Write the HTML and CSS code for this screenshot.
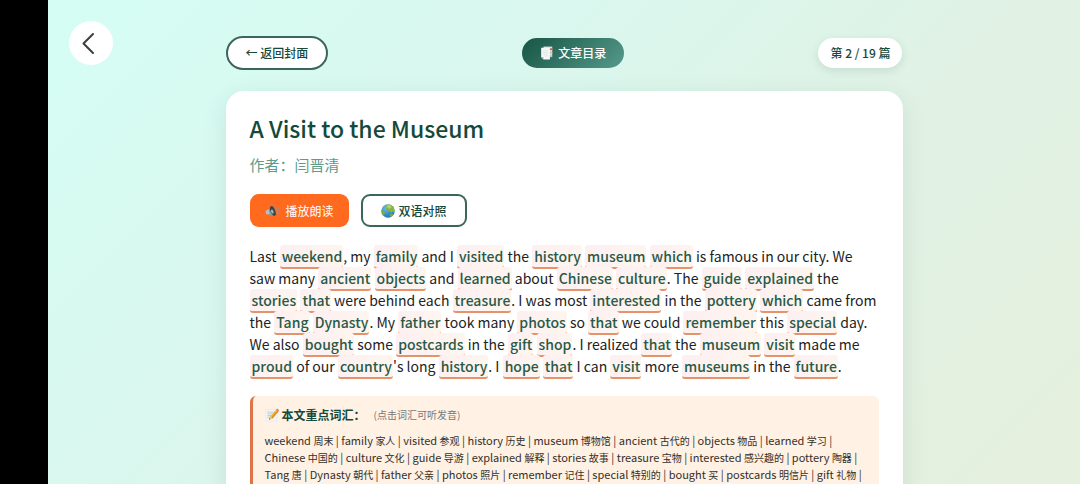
FILE: index.html
```html
<!DOCTYPE html>
<html lang="zh-CN">
<head>
<meta charset="utf-8">
<meta name="viewport" content="width=device-width, initial-scale=1">
<title>A Visit to the Museum</title>
<link rel="stylesheet" href="styles.css">
</head>
<body>
<div class="screen">
  <main class="page">
    <button class="back" type="button" aria-label="返回">
      <svg viewBox="0 0 24 24" width="24" height="24" fill="none" stroke="#3b3f3d" stroke-width="2" stroke-linecap="round" stroke-linejoin="round"><path d="M16 3L6.500 12.500L16 22"/></svg>
    </button>
    <div class="reader">
      <nav class="topbar">
        <button class="pill pill-outline" type="button">← 返回封面</button>
        <button class="pill pill-dark" type="button">
          <svg class="emoji" viewBox="0 0 24 24"><path d="M6 1h15v18H6z" fill="#d9e0de"/><path d="M2 3h15v20H6l-4-4z" fill="#f7f9f8"/><path d="M2 19h4v4z" fill="#aebbb7"/><path d="M5 8h9M5 11h9M5 14h9M8 17h6" stroke="#d3dbd9" stroke-width="1"/><path d="M17 4h4v3h-4z" fill="#d95b4d"/><path d="M17 10h4v3h-4z" fill="#dcc791"/><path d="M17 16h3v3h-3z" fill="#a9c2ce"/></svg>
          文章目录
        </button>
        <span class="pill pill-count">第 2 / 19 篇</span>
      </nav>
      <article class="card">
        <h1 class="title">A Visit to the Museum</h1>
        <p class="author">作者：闫晋清</p>
        <div class="actions">
          <button class="action action-play" type="button">
            <svg class="emoji" viewBox="0 0 24 24"><path d="M1 12l5-3 5-7c5 3 8 10 7 18l-11-1-5-2z" fill="#8d989b"/><path d="M1 12l5-3 2 9-6-1z" fill="#b9c0c1"/><ellipse cx="13.500" cy="12" rx="4" ry="9" fill="#3b474b" transform="rotate(-22 13.500 12)"/><ellipse cx="12.500" cy="13" rx="2" ry="3.500" fill="#a9b4b7" transform="rotate(-22 12.500 13)"/><path d="M18 6c3 3 4 7 2 11M20 2c4 4 5 10 3 15" fill="none" stroke="#b98674" stroke-width="1.500" stroke-linecap="round"/></svg>
            <span>播放朗读</span>
          </button>
          <button class="action action-dual" type="button">
            <svg class="emoji" viewBox="0 0 24 24"><defs><clipPath id="globe"><circle cx="12" cy="12" r="11.500"/></clipPath><radialGradient id="sea" cx=".35" cy=".3" r=".8"><stop offset="0" stop-color="#5fbcf7"/><stop offset="1" stop-color="#1765bd"/></radialGradient></defs><g clip-path="url(#globe)"><path d="M0 0h24v24H0z" fill="url(#sea)"/><path d="M9 1l6-1 6 3 3 7-2 5-3-2-1 3-3-4-2 1-2-4-3-1z" fill="#86b83c"/><path d="M11 1l6 1 1 4-4 2-4-3z" fill="#b9cc66"/><path d="M15 18l4-2 3 3-3 4-4-2z" fill="#79ae3b"/><path d="M0 9l4 2 3 4-2 5-5-4z" fill="#79ae3b"/></g></svg>
            双语对照
          </button>
        </div>
        <p class="story">Last <span class="word">weekend</span>, my <span class="word">family</span> and I <span class="word">visited</span> the <span class="word">history</span> <span class="word">museum</span> <span class="word">which</span> is famous in our city. We saw many <span class="word">ancient</span> <span class="word">objects</span> and <span class="word">learned</span> about <span class="word">Chinese</span> <span class="word">culture</span>. The <span class="word">guide</span> <span class="word">explained</span> the <span class="word">stories</span> <span class="word">that</span> were behind each <span class="word">treasure</span>. I was most <span class="word">interested</span> in the <span class="word">pottery</span> <span class="word">which</span> came from the <span class="word">Tang</span> <span class="word">Dynasty</span>. My <span class="word">father</span> took many <span class="word">photos</span> so <span class="word">that</span> we could <span class="word">remember</span> this <span class="word">special</span> day. We also <span class="word">bought</span> some <span class="word">postcards</span> in the <span class="word">gift</span> <span class="word">shop</span>. I realized <span class="word">that</span> the <span class="word">museum</span> <span class="word">visit</span> made me <span class="word">proud</span> of our <span class="word">country</span>'s long <span class="word">history</span>. I <span class="word">hope</span> <span class="word">that</span> I can <span class="word">visit</span> more <span class="word">museums</span> in the <span class="word">future</span>.</p>
        <section class="vocab">
          <h2 class="vocab-title">
            <svg class="emoji" viewBox="0 0 24 24"><path d="M1 2h20v21H1z" fill="#dfe5e6"/><path d="M2 3h18v19H2z" fill="#f4f6f5"/><path d="M4 7h12M4 10h9M4 13h7M4 16h5" stroke="#a9bcc4" stroke-width="1.200"/><path d="M7 20l2-6L19 3l4 3-10 12z" fill="#f2b634"/><path d="M11 16L21 4.500l2 1.500-10 12z" fill="#d9902b"/><path d="M19 3l2-2 3 3-1 2z" fill="#d9736b"/><path d="M7 20l2-6 4 4z" fill="#e8c89a"/><path d="M7 20l.8-2.500 1.700 1.500z" fill="#444"/></svg>
            本文重点词汇：<span class="hint">(点击词汇可听发音)</span>
          </h2>
          <p class="vocab-list">weekend <span class="zh">周末</span> | family <span class="zh">家人</span> | visited <span class="zh">参观</span> | history <span class="zh">历史</span> | museum <span class="zh">博物馆</span> | ancient <span class="zh">古代的</span> | objects <span class="zh">物品</span> | learned <span class="zh">学习</span> |<br>Chinese <span class="zh">中国的</span> | culture <span class="zh">文化</span> | guide <span class="zh">导游</span> | explained <span class="zh">解释</span> | stories <span class="zh">故事</span> | treasure <span class="zh">宝物</span> | interested <span class="zh">感兴趣的</span> | pottery <span class="zh">陶器</span> |<br>Tang <span class="zh">唐</span> | Dynasty <span class="zh">朝代</span> | father <span class="zh">父亲</span> | photos <span class="zh">照片</span> | remember <span class="zh">记住</span> | special <span class="zh">特别的</span> | bought <span class="zh">买</span> | postcards <span class="zh">明信片</span> | gift <span class="zh">礼物</span> |</p>
        </section>
      </article>
    </div>
  </main>
</div>
</body>
</html>
```
FILE: styles.css
```css
* {
  box-sizing: border-box;
}

body {
  margin: 0;
  font-family: "Noto Sans CJK SC", "Noto Sans", sans-serif;
  color: #222;
}

button {
  font: inherit;
  cursor: pointer;
}

.screen {
  height: 100vh;
  overflow: hidden;
  padding-left: 48px;
  background: #000;
}

.page {
  position: relative;
  min-height: 100%;
  padding: 36px 24px;
  background: linear-gradient(135deg, #d5fdf4 0%, #daf7ee 35%, #e0f2e5 60%, #e6efdc 100%);
}

.back {
  position: absolute;
  top: 21px;
  left: 21px;
  display: grid;
  place-items: center;
  width: 44px;
  height: 44px;
  padding: 0 4px 0 0;
  border: 0;
  border-radius: 50%;
  background: #fff;
}

.reader {
  max-width: 677px;
  margin: 0 auto;
}

.topbar {
  display: flex;
  align-items: center;
  justify-content: space-between;
  margin-bottom: 21px;
}

.pill {
  display: flex;
  align-items: center;
  gap: 4px;
  padding: 6px 18px;
  border: 0;
  border-radius: 20px;
  font-size: 12px;
  line-height: 18px;
  font-weight: 500;
  color: #14493b;
}

.pill-outline {
  border: 2px solid #3c665b;
  background: #fff;
}

.pill-dark {
  color: #fff;
  background: linear-gradient(135deg, #175443, #559a8c);
}

.pill-count {
  padding: 6px 12px;
  background: #fff;
  box-shadow: 0 3px 10px rgba(20, 73, 59, 0.12);
}

.emoji {
  flex: none;
  width: 14px;
  height: 14px;
}

.card {
  padding: 20px 24px 24px;
  border-radius: 18px;
  background: #fff;
  box-shadow: 0 6px 24px rgba(20, 73, 59, 0.1);
}

.title {
  margin: 0;
  font-size: 23px;
  line-height: 34px;
  font-weight: 500;
  color: #14493b;
}

.author {
  margin: 8px 0 0;
  font-size: 15px;
  line-height: 24px;
  color: #5d9b8b;
}

.actions {
  display: flex;
  gap: 12px;
  margin: 17px 0 18px;
}

.action {
  display: flex;
  align-items: center;
  gap: 4px;
  height: 33px;
  padding: 0 18px;
  border: 2px solid #3c665b;
  border-radius: 9px;
  background: #fff;
  font-size: 12px;
  line-height: 18px;
  font-weight: 500;
  color: #14493b;
}

.action-play {
  gap: 7px;
  padding: 0 15px;
  border: 0;
  background: #ff6a1f;
  color: #fff;
  font-weight: 400;
}

.story {
  margin: 0;
  font-size: 14px;
  line-height: 22px;
}

.word {
  padding: 1px 1px 1px 2px;
  border-bottom: 2px solid #e5936c;
  border-radius: 3px;
  background: linear-gradient(120deg, #fdeff2, #fef6ee);
  font-weight: 500;
  color: #2a5a46;
}

.vocab {
  margin-top: 19px;
  padding: 10px 12px 24px;
  border-left: 3px solid #dc7548;
  border-radius: 6px;
  background: #fff1e3;
}

.vocab-title {
  display: flex;
  align-items: center;
  gap: 3px;
  margin: 0 0 8px;
  font-size: 12px;
  line-height: 18px;
  font-weight: 700;
  color: #14493b;
}

.hint {
  margin-left: 5px;
  font-size: 10px;
  font-weight: 400;
  color: #777;
}

.vocab-list {
  margin: 0;
  font-size: 11px;
  line-height: 17px;
  color: #33302a;
}

.zh {
  font-size: 10px;
}
```
